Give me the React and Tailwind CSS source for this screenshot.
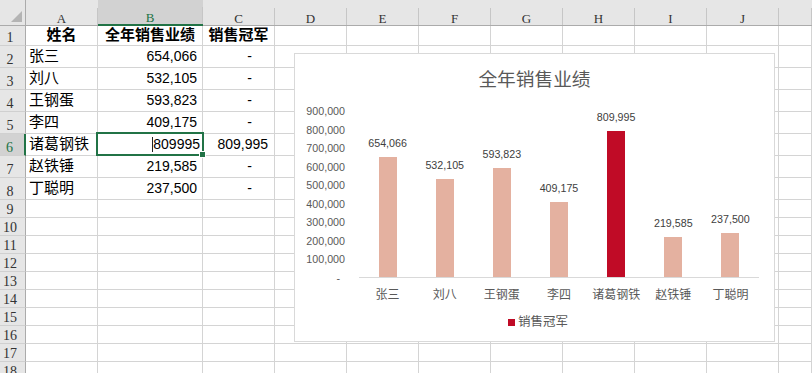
import React from 'react';

const sales = [
  ['张三', 654066],
  ['刘八', 532105],
  ['王钢蛋', 593823],
  ['李四', 409175],
  ['诸葛钢铁', 809995],
  ['赵铁锤', 219585],
  ['丁聪明', 237500],
];

const letters = ['A', 'B', 'C', 'D', 'E', 'F', 'G', 'H', 'I', 'J', ''];
const yTicks = ['900,000', '800,000', '700,000', '600,000', '500,000', '400,000', '300,000', '200,000', '100,000', '-'];
const fmt = (n) => n.toLocaleString('en-US');
const champ = Math.max(...sales.map((s) => s[1]));

const Cell = ({ children, className = '' }) => (
  <div className={`border-r border-b border-[#d4d4d4] flex items-center whitespace-nowrap ${className}`}>
    {children}
  </div>
);

const RowHead = ({ n, active }) => (
  <div
    className={`border-b border-[#d0d0d0] flex items-end justify-center pr-[5px] leading-[15px] text-[14px] [font-family:'Liberation_Serif',serif] ${
      active ? 'bg-[#d2d2d2] text-[#217346] border-r-2 border-r-[#217346]' : 'bg-[#e6e6e6] text-[#333] border-r border-r-[#ababab]'
    }`}
  >
    {n}
  </div>
);

const Chart = () => (
  <div className="absolute left-[294px] top-[53px] w-[481px] h-[289px] border border-[#d9d9d9] bg-white flex flex-col [font-family:'Liberation_Sans','Noto_Sans_CJK_SC',sans-serif]">
    <div className="h-[48px] pt-[14px] text-center text-[18.7px] leading-[24px] text-[#595959]">全年销售业绩</div>
    <div className="flex">
      {/* y axis */}
      <div className="w-[50px] flex flex-col">
        {yTicks.map((t) => (
          <div
            key={t}
            className={`h-[18.5px] flex items-center justify-end text-[10.7px] text-[#595959] ${t === '-' ? 'pr-[5px]' : ''}`}
          >
            {t}
          </div>
        ))}
      </div>
      <div className="ml-[14px] w-[400px] pt-[9.25px]">
        <div className="h-[167px] border-b border-[#d9d9d9] flex">
          {sales.map(([name, v]) => (
            <div key={name} className="flex-1 flex flex-col items-center justify-end">
              <div className="text-[10.7px] leading-[13px] text-[#404040] mb-[7px]">{fmt(v)}</div>
              <div
                className={`w-[18px] ${v === champ ? 'bg-[#c00b26]' : 'bg-[#e4b1a0]'}`}
                style={{ height: `${(v / 900000) * 166}px` }}
              />
            </div>
          ))}
        </div>
        <div className="flex mt-[10px]">
          {sales.map(([name]) => (
            <div key={name} className="flex-1 text-center text-[12px] leading-[14px] text-[#595959]">
              {name}
            </div>
          ))}
        </div>
      </div>
    </div>
    <div className="mt-[13px] flex items-center justify-center gap-[3px] pl-[7px]">
      <div className="w-[7px] h-[7px] bg-[#c00b26]" />
      <div className="text-[12.5px] leading-[14px] text-[#595959]">销售冠军</div>
    </div>
  </div>
);

const App = () => {
  const rowNums = Array.from({ length: 18 }, (_, i) => i + 1);

  return (
    <div className="relative w-[812px] h-[373px] overflow-hidden bg-white text-black [font-family:'Liberation_Sans','Noto_Sans_CJK_SC',sans-serif]">
      <div className="grid grid-cols-[26px_72px_105px_72px_repeat(7,72px)_1fr] grid-rows-[26px_20px_repeat(7,22px)_repeat(10,18px)]">
        {/* corner */}
        <div className="bg-[#e6e6e6] border-b border-r border-[#ababab] flex items-end justify-end pr-[3px] pb-[3px]">
          <svg width="11" height="11" viewBox="0 0 11 11">
            <polygon points="11,0 11,11 0,11" fill="#b4b4b4" />
          </svg>
        </div>
        {letters.map((l, i) => (
          <div
            key={i}
            className={`flex items-end ${
              l === 'B' ? 'bg-[#d2d2d2] border-b-2 border-[#217346] text-[#217346]' : 'bg-[#e6e6e6] border-b border-[#ababab] text-[#333]'
            }`}
          >
            <div className="h-[17px] w-full border-r border-[#c6c6c6] flex items-end justify-center leading-[13px] text-[13px] [font-family:'Liberation_Serif',serif]">
              {l}
            </div>
          </div>
        ))}

        {rowNums.map((r) => {
          const d = r >= 2 && r <= 8 ? sales[r - 2] : null;
          const editing = r === 6;
          return (
            <React.Fragment key={r}>
              <RowHead n={r} active={editing} />
              {/* A */}
              {r === 1 ? (
                <Cell className="justify-center font-bold text-[15px]">姓名</Cell>
              ) : (
                <Cell className="pl-[3px] text-[15px]">{d ? d[0] : ''}</Cell>
              )}
              {/* B */}
              {r === 1 ? (
                <Cell className="justify-center font-bold text-[15px]">全年销售业绩</Cell>
              ) : editing ? (
                <Cell className="relative justify-end pr-[2px] text-[14px]">
                  <span className="w-px h-[15px] bg-[#222]" />
                  <span>{d[1]}</span>
                  <div className="absolute -left-[2px] -right-[2px] -top-[2px] -bottom-[1px] border-2 border-[#217346]" />
                  <div className="absolute -right-[3px] -bottom-[2px] w-[5px] h-[5px] bg-[#217346] outline outline-1 outline-white" />
                </Cell>
              ) : (
                <Cell className="justify-end pr-[5px] text-[14px]">{d ? fmt(d[1]) : ''}</Cell>
              )}
              {/* C */}
              {r === 1 ? (
                <Cell className="justify-center font-bold text-[15px]">销售冠军</Cell>
              ) : d ? (
                d[1] === champ ? (
                  <Cell className="justify-end pr-[6px] text-[14px]">{fmt(d[1])}</Cell>
                ) : (
                  <Cell className="justify-end pr-[22px] text-[14px]">-</Cell>
                )
              ) : (
                <Cell />
              )}
              {/* D..K */}
              {Array.from({ length: 8 }, (_, i) => (
                <Cell key={i} />
              ))}
            </React.Fragment>
          );
        })}
      </div>
      <Chart />
    </div>
  );
};

export default App;
